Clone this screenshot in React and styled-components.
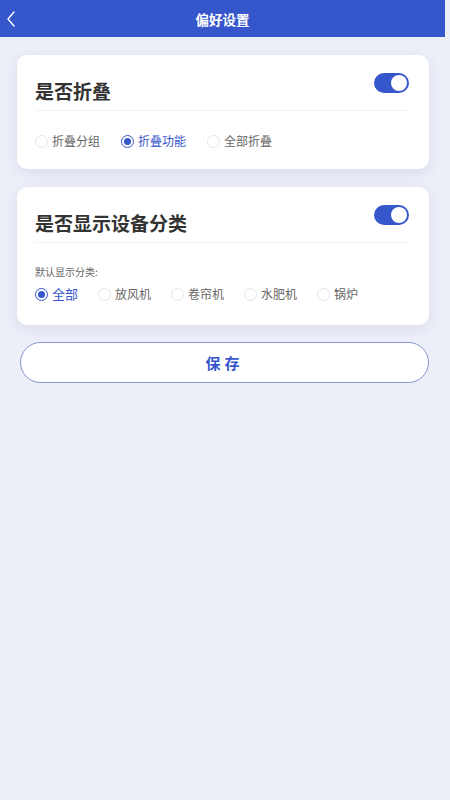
import styled, {createGlobalStyle} from 'styled-components';
import {useState} from 'react';

const GlobalStyle = createGlobalStyle`
  html, body {
    margin: 0;
    padding: 0;
    background: #eceef8;
    font-family: "Noto Sans CJK SC", "Noto Sans", sans-serif;
  }
`

const Page = styled.div`
  width: 450px;
  min-height: 800px;
  background: #eceef8;
  display: flex;
  flex-direction: column;
`

const Header = styled.header`
  height: 37px;
  width: 445px;
  background: #3656cc;
  display: flex;
  align-items: center;
  justify-content: center;
  position: relative;
  color: #fff;
  font-size: 13.5px;
  font-weight: 700;
`

const BackBtn = styled.button`
  position: absolute;
  left: 5px;
  top: 10px;
  border: none;
  background: transparent;
  padding: 0;
  display: flex;
  cursor: pointer;
`

const Content = styled.main`
  padding: 18px 21px 0 17px;
  display: flex;
  flex-direction: column;
  gap: 18px;
`

const Card = styled.section`
  background: #fff;
  border-radius: 10px;
  box-shadow: 0 4px 14px rgba(60, 70, 120, 0.09);
  padding: 18px 20px ${p => p.$bottom}px 18px;
`

const CardHead = styled.div`
  display: flex;
  justify-content: space-between;
  align-items: flex-start;
  padding-bottom: 6px;
  border-bottom: 1px solid #f0f1f4;
`

const Title = styled.h2`
  margin: 5px 0 0;
  font-size: 19px;
  font-weight: 700;
  color: #333;
  line-height: 26px;
`

const Toggle = styled.button`
  width: 35px;
  height: 20px;
  border-radius: 10px;
  border: none;
  padding: 0;
  background: ${p => p.$on ? '#3656cc' : '#dcdfe6'};
  position: relative;
  cursor: pointer;

  &::after {
    content: '';
    position: absolute;
    top: 2px;
    left: ${p => p.$on ? '17px' : '2px'};
    width: 16px;
    height: 16px;
    border-radius: 50%;
    background: #fff;
  }
`

const Label = styled.div`
  font-size: 10px;
  line-height: 16px;
  color: #666;
  margin-top: 21px;
`

const RadioRow = styled.div`
  display: flex;
  align-items: center;
  gap: ${p => p.$gap}px;
  margin-top: ${p => p.$top}px;
`

const RadioItem = styled.label`
  display: flex;
  align-items: center;
  gap: 4px;
  font-size: ${p => p.$size}px;
  line-height: 18px;
  color: ${p => p.$checked ? '#3656cc' : '#666'};
  cursor: pointer;
`

const Dot = styled.span`
  width: 13px;
  height: 13px;
  border-radius: 50%;
  box-sizing: border-box;
  border: 1px solid ${p => p.$checked ? '#3656cc' : '#e2e4ea'};
  display: flex;
  align-items: center;
  justify-content: center;

  &::after {
    content: '';
    width: 7px;
    height: 7px;
    border-radius: 50%;
    background: ${p => p.$checked ? '#3656cc' : 'transparent'};
  }
`

const SaveBtn = styled.button`
  margin: -1px 0 0 3px;
  height: 41px;
  border-radius: 21px;
  border: 1px solid #8593cf;
  background: #fff;
  color: #3656cc;
  font-family: inherit;
  font-size: 15px;
  font-weight: 700;
  letter-spacing: 4px;
  cursor: pointer;
`

const Radio = ({label, checked, size, onClick}) => (
  <RadioItem $checked={checked} $size={size} onClick={onClick}>
    <Dot $checked={checked}/>
    {label}
  </RadioItem>
)

const App = () => {
  const [fold, setFold] = useState(true);
  const [showCat, setShowCat] = useState(true);
  const [foldType, setFoldType] = useState('折叠功能');
  const [cat, setCat] = useState('全部');

  return (
    <Page>
      <GlobalStyle/>
      <Header>
        <BackBtn aria-label="返回">
          <svg width="12" height="18" viewBox="0 0 12 18">
            <path d="M9 2 L3 9 L9 16" fill="none" stroke="#fff" strokeWidth="1.4" strokeLinecap="round" strokeLinejoin="round"/>
          </svg>
        </BackBtn>
        偏好设置
      </Header>
      <Content>
        <Card $bottom={19}>
          <CardHead>
            <Title>是否折叠</Title>
            <Toggle $on={fold} onClick={() => setFold(!fold)}/>
          </CardHead>
          <RadioRow $gap={21} $top={21}>
            {['折叠分组', '折叠功能', '全部折叠'].map(t => (
              <Radio key={t} label={t} size={12} checked={foldType === t} onClick={() => setFoldType(t)}/>
            ))}
          </RadioRow>
        </Card>
        <Card $bottom={22}>
          <CardHead>
            <Title>是否显示设备分类</Title>
            <Toggle $on={showCat} onClick={() => setShowCat(!showCat)}/>
          </CardHead>
          <Label>默认显示分类:</Label>
          <RadioRow $gap={20} $top={5}>
            {['全部', '放风机', '卷帘机', '水肥机', '锅炉'].map(t => (
              <Radio key={t} label={t} size={t === '全部' ? 13 : 12} checked={cat === t} onClick={() => setCat(t)}/>
            ))}
          </RadioRow>
        </Card>
        <SaveBtn>保存</SaveBtn>
      </Content>
    </Page>
  )
}

export default App;
